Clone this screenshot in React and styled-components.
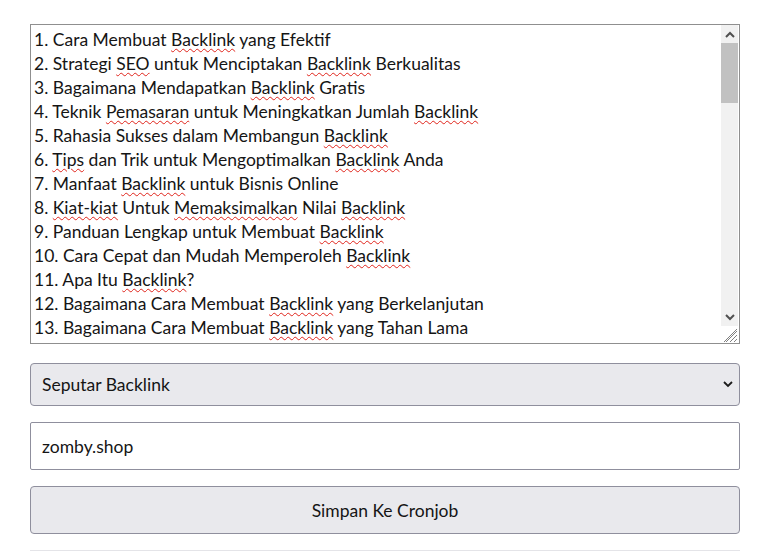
import React from 'react';
import styled, { createGlobalStyle } from 'styled-components';

const GlobalStyle = createGlobalStyle`
  body {
    margin: 0;
    background: #ffffff;
    font-family: 'Lato', 'Noto Sans', sans-serif;
    color: #151515;
  }
`;

const titles = [
  ['1. Cara Membuat ', ['Backlink'], ' yang Efektif'],
  ['2. Strategi ', ['SEO'], ' untuk Menciptakan ', ['Backlink'], ' Berkualitas'],
  ['3. Bagaimana Mendapatkan ', ['Backlink'], ' Gratis'],
  ['4. Teknik ', ['Pemasaran'], ' untuk Meningkatkan Jumlah ', ['Backlink']],
  ['5. Rahasia Sukses dalam Membangun ', ['Backlink']],
  ['6. ', ['Tips'], ' dan Trik untuk Mengoptimalkan ', ['Backlink'], ' Anda'],
  ['7. Manfaat ', ['Backlink'], ' untuk Bisnis Online'],
  ['8. ', ['Kiat-kiat'], ' Untuk ', ['Memaksimalkan'], ' Nilai ', ['Backlink']],
  ['9. Panduan Lengkap untuk Membuat ', ['Backlink']],
  ['10. Cara Cepat dan Mudah Memperoleh ', ['Backlink']],
  ['11. Apa Itu ', ['Backlink'], '?'],
  ['12. Bagaimana Cara Membuat ', ['Backlink'], ' yang Berkelanjutan'],
  ['13. Bagaimana Cara Membuat ', ['Backlink'], ' yang Tahan Lama'],
];

const Page = styled.div`
  width: 710px;
  padding: 24px 0 0 30px;
  display: flex;
  flex-direction: column;
`;

const TextBox = styled.div`
  height: 318px;
  border: 1px solid #8f8f8f;
  display: flex;
  background: #fff;
`;

const TextContent = styled.div`
  flex: 1;
  padding: 3px 3px;
  font-size: 17.5px;
  line-height: 24px;
  overflow: hidden;
  white-space: nowrap;
`;

const Misspelled = styled.span`
  text-decoration: underline wavy #e0241b;
  text-decoration-thickness: 1px;
  text-underline-offset: 2px;
`;

const Scrollbar = styled.div`
  width: 17px;
  display: flex;
  flex-direction: column;
  background: #f1f1f1;
  margin-right: 1px;
`;

const Arrow = styled.div`
  height: 18px;
  display: flex;
  align-items: center;
  justify-content: center;
`;

const Track = styled.div`
  flex: 1;
`;

const Thumb = styled.div`
  height: 60px;
  background: #c1c1c1;
`;

const Grip = styled.div`
  height: 17px;
  background: #fff;
  display: flex;
  align-items: flex-end;
  justify-content: flex-end;
`;

const Field = styled.div`
  font-size: 17.5px;
  border: 1px solid #8f8f9d;
  display: flex;
  align-items: center;
`;

const Select = styled(Field)`
  margin-top: 19px;
  height: 41px;
  border-radius: 4px;
  background: #e9e9ed;
  justify-content: space-between;
  padding: 0 6px 0 11px;
`;

const Input = styled(Field)`
  margin-top: 16px;
  height: 46px;
  border-radius: 2px;
  background: #fff;
  padding: 0 11px;
`;

const Button = styled(Field)`
  margin-top: 16px;
  height: 46px;
  border-radius: 4px;
  background: #e9e9ed;
  justify-content: center;
`;

const Divider = styled.div`
  margin-top: 16px;
  height: 1px;
  background: #e4e4e8;
`;

const Chevron = ({ up }) => (
  <svg width="10" height="7" viewBox="0 0 10 7">
    <path
      d={up ? 'M1 6 L5 2 L9 6' : 'M1 1 L5 5 L9 1'}
      fill="none"
      stroke="#505050"
      strokeWidth="2"
    />
  </svg>
);

const App = () => (
  <Page>
    <GlobalStyle />
    <TextBox>
      <TextContent>
        {titles.map((parts, i) => (
          <div key={i}>
            {parts.map((p, j) =>
              Array.isArray(p) ? <Misspelled key={j}>{p[0]}</Misspelled> : <span key={j}>{p}</span>
            )}
          </div>
        ))}
      </TextContent>
      <Scrollbar>
        <Arrow>
          <Chevron up />
        </Arrow>
        <Track>
          <Thumb />
        </Track>
        <Arrow>
          <Chevron />
        </Arrow>
        <Grip>
          <svg width="14" height="14" viewBox="0 0 14 14">
            <path d="M13 2 L2 13 M13 6 L6 13 M13 10 L10 13 M13 0 L0 13" stroke="#808080" strokeWidth="1" />
          </svg>
        </Grip>
      </Scrollbar>
    </TextBox>
    <Select>
      <span>Seputar Backlink</span>
      <svg width="10" height="7" viewBox="0 0 10 7">
        <path d="M1 1 L5 5 L9 1" fill="none" stroke="#1b1b1b" strokeWidth="1.8" />
      </svg>
    </Select>
    <Input>zomby.shop</Input>
    <Button>Simpan Ke Cronjob</Button>
    <Divider />
  </Page>
);

export default App;
